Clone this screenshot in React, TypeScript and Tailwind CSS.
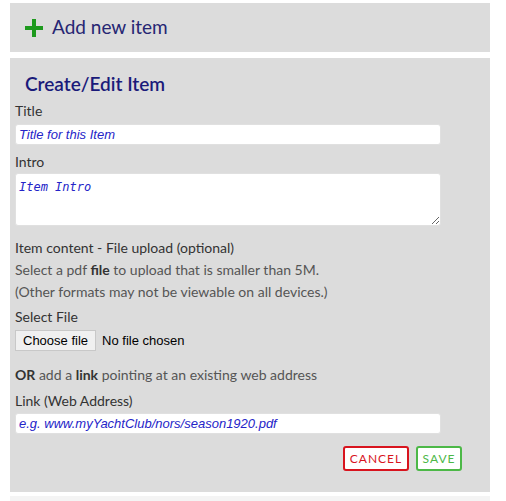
import { FC } from "react";

const App: FC = () => {
  return (
    <div className="min-h-[501px] bg-white pt-[3px] text-[14px] text-[#333]" style={{ fontFamily: "Lato, 'Open Sans', sans-serif" }}>
      {/* 添加新条目 */}
      <div className="ml-[10px] w-[480px] h-[49px] bg-[#dcdcdc] flex items-center pl-[15px]">
        <svg width="18" height="18" viewBox="0 0 18 18" className="mr-[9px]">
          <rect x="7" y="0" width="4" height="18" fill="#1e9a1e" />
          <rect x="0" y="7" width="18" height="4" fill="#1e9a1e" />
        </svg>
        <span className="text-[19px] text-[#262673]">Add new item</span>
      </div>

      {/* 表单 */}
      <div className="ml-[10px] mt-[6px] w-[480px] h-[434px] bg-[#dcdcdc] pl-[5px] pt-[14px]">
        <h2 className="text-[19px] font-semibold text-[#1a1a7a] pl-[10px] leading-[24px]">Create/Edit Item</h2>

        <label className="block mt-[5px] leading-[20px] text-[#333]">Title</label>
        <input
          type="text"
          placeholder="Title for this Item"
          className="mt-[3px] block w-[426px] h-[21px] bg-white rounded-[3px] border border-[#e0e0e0] px-[3px] text-[13px] italic placeholder:text-[#2424c8] outline-none"
          style={{ fontFamily: "'Liberation Sans', Arial, sans-serif" }}
        />

        <label className="block mt-[7px] leading-[20px] text-[#333]">Intro</label>
        <textarea
          placeholder="Item Intro"
          className="mt-[1px] block w-[426px] h-[53px] bg-white rounded-[3px] border border-[#e0e0e0] px-[3px] py-[4px] text-[12px] italic placeholder:text-[#2424c8] outline-none resize"
          style={{ fontFamily: "'DejaVu Sans Mono', monospace" }}
        />

        <div className="mt-[11px] leading-[22px]">
          <div className="text-[#333]">Item content - File upload (optional)</div>
          <div className="text-[#555]">
            Select a pdf <span className="font-bold text-[#333]">file</span> to upload that is smaller than 5M.
          </div>
          <div className="text-[#555]">(Other formats may not be viewable on all devices.)</div>
        </div>

        <label className="block mt-[3px] leading-[22px] text-[#333]">Select File</label>
        <div className="mt-[2px] flex items-center" style={{ fontFamily: "'Liberation Sans', Arial, sans-serif" }}>
          <button className="h-[21px] px-[7px] bg-[#f0f0f0] border border-[#c8c8c8] text-[13px] text-black">Choose file</button>
          <span className="ml-[6px] text-[13px] text-black">No file chosen</span>
        </div>

        <div className="mt-[13px] leading-[22px] text-[#555]">
          <span className="font-bold text-[#333]">OR</span> add a <span className="font-bold text-[#333]">link</span> pointing at an existing web address
        </div>
        <label className="block mt-[4px] leading-[22px] text-[#333]">Link (Web Address)</label>
        <input
          type="text"
          placeholder="e.g. www.myYachtClub/nors/season1920.pdf"
          className="mt-[1px] block w-[426px] h-[21px] bg-white rounded-[3px] border border-[#e0e0e0] px-[3px] text-[13px] italic placeholder:text-[#2424c8] outline-none"
          style={{ fontFamily: "'Liberation Sans', Arial, sans-serif" }}
        />

        <div className="mt-[12px] flex justify-end gap-[7px] w-[447px]">
          <button className="w-[66px] h-[25px] bg-white border-2 border-[#d8141e] rounded-[3px] text-[12px] tracking-[1px] text-[#d8141e]">CANCEL</button>
          <button className="w-[46px] h-[25px] bg-white border-2 border-[#4cb847] rounded-[3px] text-[12px] tracking-[1px] text-[#4cb847]">SAVE</button>
        </div>
      </div>

      <div className="ml-[10px] mt-[4px] w-[480px] h-[8px] bg-[#f4f4f4]" />
    </div>
  );
};

export default App;
